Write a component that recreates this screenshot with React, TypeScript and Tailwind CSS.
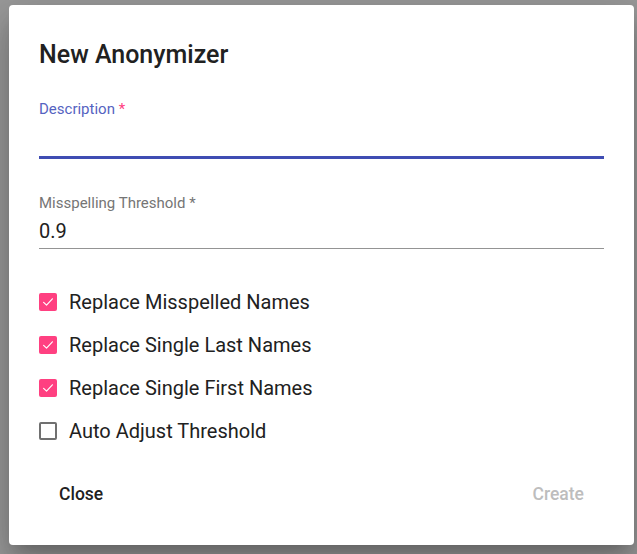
import React, { useState } from 'react';

type Option = { key: string; label: string; checked: boolean };

const initialOptions: Option[] = [
  { key: 'misspelled', label: 'Replace Misspelled Names', checked: true },
  { key: 'last', label: 'Replace Single Last Names', checked: true },
  { key: 'first', label: 'Replace Single First Names', checked: true },
  { key: 'auto', label: 'Auto Adjust Threshold', checked: false },
];

const Checkbox: React.FC<{ checked: boolean; onToggle: () => void; label: string }> = ({ checked, onToggle, label }) => (
  <label className="flex items-center h-[43px] cursor-pointer" onClick={onToggle}>
    {checked ? (
      <span className="w-[18px] h-[18px] rounded-[2px] bg-[#ff4081] flex items-center justify-center">
        <svg width="14" height="14" viewBox="0 0 24 24" fill="none" stroke="white" strokeWidth="2" strokeLinecap="round" strokeLinejoin="round">
          <path d="M4.5 12.5l5 5 10-11" />
        </svg>
      </span>
    ) : (
      <span className="w-[18px] h-[18px] rounded-[2px] border-[2.5px] border-[#707070] box-border" />
    )}
    <span className="ml-[12px] text-[20px] leading-[24px] text-[#212121]">{label}</span>
  </label>
);

const App: React.FC = () => {
  const [options, setOptions] = useState<Option[]>(initialOptions);
  const [description, setDescription] = useState('');
  const [threshold, setThreshold] = useState('0.9');

  const toggle = (key: string) => {
    setOptions(prev => prev.map(o => (o.key === key ? { ...o, checked: !o.checked } : o)));
  };

  return (
    <div className="w-[637px] h-[554px] bg-[#9a9a9a] pt-[5px] pl-[9px] pr-[3px] font-['Roboto',sans-serif]">
      <div className="w-[625px] h-[540px] bg-white rounded-[4px] shadow-[0_11px_15px_-7px_rgba(0,0,0,0.2),0_24px_38px_3px_rgba(0,0,0,0.14),0_9px_46px_8px_rgba(0,0,0,0.12)] flex flex-col pl-[30px] pr-[30px]">
        <h2 className="mt-[34px] text-[25px] font-medium text-[#212121] leading-[32px]">New Anonymizer</h2>

        <div className="mt-[29px] flex flex-col">
          <label className="text-[15px] leading-[18px] text-[#5563c1]">
            Description <span className="text-[#ff4081]">*</span>
          </label>
          <div className="mt-[5px] h-[30px] flex items-center">
            <input
              autoFocus
              value={description}
              onChange={e => setDescription(e.target.value)}
              className="w-full h-full text-[20px] text-[#212121] outline-none caret-[#3f51b5] bg-transparent"
            />
          </div>
          <div className="mt-[3px] h-[3px] bg-[#3f4db3]" />
        </div>

        <div className="mt-[35px] flex flex-col">
          <label className="text-[15px] leading-[18px] text-[#757575]">Misspelling Threshold *</label>
          <input
            value={threshold}
            onChange={e => setThreshold(e.target.value)}
            className="mt-[4px] h-[30px] text-[20px] text-[#212121] outline-none bg-transparent"
          />
          <div className="mt-[2px] h-px bg-[#949494]" />
        </div>

        <div className="mt-[31px] flex flex-col">
          {options.map(o => (
            <Checkbox key={o.key} checked={o.checked} label={o.label} onToggle={() => toggle(o.key)} />
          ))}
        </div>

        <div className="mt-[30px] flex justify-between pr-[20px]">
          <button className="ml-[20px] text-[17.5px] leading-[24px] font-medium text-[#212121]">Close</button>
          <button disabled className="text-[17.5px] leading-[24px] font-medium text-[#bdbdbd]">Create</button>
        </div>
      </div>
    </div>
  );
};

export default App;
